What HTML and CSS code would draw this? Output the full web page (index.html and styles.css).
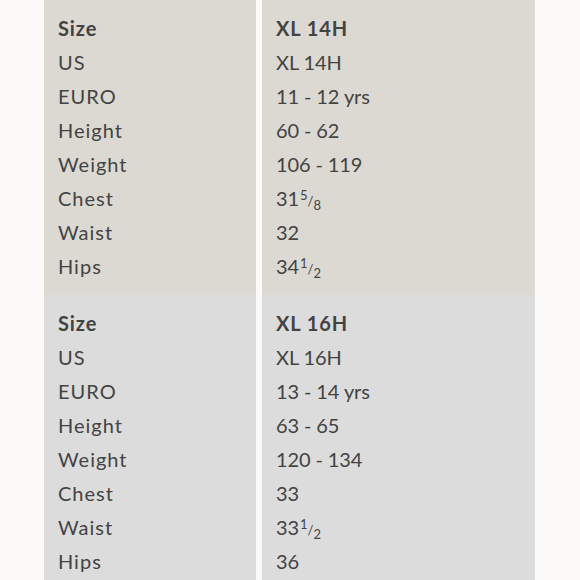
FILE: index.html
```html
<!DOCTYPE html>
<html>
<head>
<meta charset="utf-8">
<link rel="stylesheet" href="styles.css">
</head>
<body>
<div class="chart">
  <div class="section beige">
    <div class="col labels">
      <div class="row head">Size</div>
      <div class="row">US</div>
      <div class="row">EURO</div>
      <div class="row">Height</div>
      <div class="row">Weight</div>
      <div class="row">Chest</div>
      <div class="row">Waist</div>
      <div class="row">Hips</div>
    </div>
    <div class="col values">
      <div class="row head">XL 14H</div>
      <div class="row">XL 14H</div>
      <div class="row">11 - 12 yrs</div>
      <div class="row">60 - 62</div>
      <div class="row">106 - 119</div>
      <div class="row">31<span class="frac"><sup>5</sup>/<sub>8</sub></span></div>
      <div class="row">32</div>
      <div class="row">34<span class="frac"><sup>1</sup>/<sub>2</sub></span></div>
    </div>
  </div>
  <div class="section grey">
    <div class="col labels">
      <div class="row head">Size</div>
      <div class="row">US</div>
      <div class="row">EURO</div>
      <div class="row">Height</div>
      <div class="row">Weight</div>
      <div class="row">Chest</div>
      <div class="row">Waist</div>
      <div class="row">Hips</div>
    </div>
    <div class="col values">
      <div class="row head">XL 16H</div>
      <div class="row">XL 16H</div>
      <div class="row">13 - 14 yrs</div>
      <div class="row">63 - 65</div>
      <div class="row">120 - 134</div>
      <div class="row">33</div>
      <div class="row">33<span class="frac"><sup>1</sup>/<sub>2</sub></span></div>
      <div class="row">36</div>
    </div>
  </div>
</div>
</body>
</html>
```
FILE: styles.css
```css
html, body {
  margin: 0;
  padding: 0;
  background: #fbfaf9;
}
body {
  font-family: Lato, "Open Sans", sans-serif;
  color: #434343;
  font-size: 20px;
  width: 580px;
  height: 580px;
  overflow: hidden;
}
.chart {
  margin-left: 44px;
  width: 491px;
  display: flex;
  flex-direction: column;
}
.section {
  display: flex;
  gap: 6px;
}
.col {
  padding: 11px 0 12px 14px;
  display: flex;
  flex-direction: column;
}
.labels { width: 212px; box-sizing: border-box; letter-spacing: 1px; }
.values { flex: 1; letter-spacing: -0.1px; }
.beige .col { background: #dcd9d3; }
.grey .col { background: #dcdcdc; }
.row {
  height: 34px;
  line-height: 34px;
}
.head {
  font-weight: 700;
  letter-spacing: 0.9px;
}
.frac {
  font-size: 13px;
  letter-spacing: 0;
  margin-left: 1px;
}
.frac sup, .frac sub {
  font-size: 13px;
  line-height: 0;
}
.frac sup { vertical-align: 6px; }
.frac sub { vertical-align: -4px; }
```
